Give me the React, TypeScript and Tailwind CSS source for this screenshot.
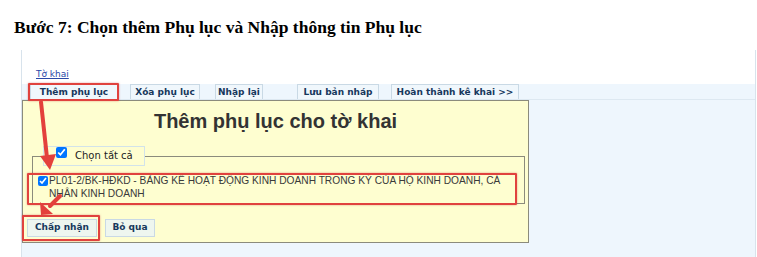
import React from 'react';

const tabs = [
  { label: 'Thêm phụ lục', w: 'w-[88px]', ml: 'ml-[8px]' },
  { label: 'Xóa phụ lục', w: 'w-[70px]', ml: 'ml-[12px]' },
  { label: 'Nhập lại', w: 'w-[48px]', ml: 'ml-[15px]' },
  { label: 'Lưu bản nháp', w: 'w-[82px]', ml: 'ml-[34px]' },
  { label: 'Hoàn thành kê khai >>', w: 'w-[128px]', ml: 'ml-[12px]' },
];

const App: React.FC = () => {
  return (
    <div className="relative w-[757px] h-[257px] overflow-hidden bg-white">
      {/* Heading */}
      <h1 className="h-[50px] pl-[14px] pt-[17px] font-['Liberation_Serif',serif] text-[17.5px] font-bold leading-[20px] text-black">
        Bước 7: Chọn thêm Phụ lục và Nhập thông tin Phụ lục
      </h1>

      {/* Embedded screenshot */}
      <div className="ml-[21px] flex h-[207px] w-[735px] flex-col border-x border-[#d8e3ec] bg-[#eef6fd] font-['DejaVu_Sans',sans-serif]">
        <div className="h-[34px] bg-white pl-[14px] pt-[10px]">
          <a href="#" className="text-[9px] leading-[12px] text-[#2a48a8] underline">Tờ khai</a>
        </div>

        <div className="flex h-[16px] border-b border-[#dde8f1]">
          {tabs.map(t => (
            <div
              key={t.label}
              className={`${t.w} ${t.ml} flex items-center justify-center border border-b-0 border-[#c9d9e5] bg-[#f0f7fc] text-[9px] font-bold leading-none text-[#17385c]`}
            >
              {t.label}
            </div>
          ))}
        </div>

        {/* Dialog */}
        <div className="h-[143px] w-[507px] border border-[#8b8b7c] bg-[#fefed0] pt-[8px]">
          <h2 className="text-center font-['Liberation_Sans',sans-serif] text-[20px] font-bold leading-[24px] text-[#333]">
            Thêm phụ lục cho tờ khai
          </h2>

          <fieldset className="ml-[9px] mt-[13px] w-[491px] border border-[#8b8b7c] px-[5px] pb-[3px]">
            <legend className="ml-[5px] flex h-[20px] w-[102px] items-center border border-[#d2e3ea] pl-[12px]">
              <input type="checkbox" checked readOnly className="h-[11px] w-[11px] -mt-[8px]" />
              <span className="ml-[8px] text-[10px] leading-none text-[#222]">Chọn tất cả</span>
            </legend>
            <div className="mt-[8px] flex items-start font-['Liberation_Sans',sans-serif]">
              <input type="checkbox" checked readOnly className="mt-[2px] h-[10px] w-[10px] shrink-0" />
              <p className="ml-[1px] w-[470px] text-[10.2px] leading-[13px] text-[#3a3a3a]">
                PL01-2/BK-HĐKD - BẢNG KÊ HOẠT ĐỘNG KINH DOANH TRONG KỲ CỦA HỘ KINH DOANH, CÁ NHÂN KINH DOANH
              </p>
            </div>
          </fieldset>

          <div className="ml-[4px] mt-[15px] flex gap-[8px]">
            <div className="flex h-[18px] w-[70px] items-center justify-center border border-[#c9d9e5] bg-[#eef6ef] text-[9px] font-bold text-[#17385c]">
              Chấp nhận
            </div>
            <div className="flex h-[18px] w-[50px] items-center justify-center border border-[#c9d9e5] bg-[#eef6ef] text-[9px] font-bold text-[#17385c]">
              Bỏ qua
            </div>
          </div>
        </div>
      </div>

      {/* Annotations */}
      <div className="absolute left-[28px] top-[83px] h-[18px] w-[91px] rounded-[1px] border-2 border-[#e0423e] shadow-[0_0_2px_rgba(200,40,40,0.5)]" />
      <div className="absolute left-[27px] top-[173px] h-[32px] w-[490px] rounded-[1px] border-2 border-[#e0423e] shadow-[0_0_2px_rgba(200,40,40,0.5)]" />
      <div className="absolute left-[22px] top-[215px] h-[26px] w-[78px] rounded-[1px] border-2 border-[#e0423e] shadow-[0_0_2px_rgba(200,40,40,0.5)]" />
      <svg className="pointer-events-none absolute left-0 top-0" width="757" height="257">
        <line x1="41" y1="102" x2="47" y2="158" stroke="#e3403c" strokeWidth="4" strokeLinecap="round" />
        <polygon points="40,156 56,154 50,170" fill="#e3403c" />
        <line x1="60" y1="196" x2="50" y2="206" stroke="#e3403c" strokeWidth="4" strokeLinecap="round" />
        <polygon points="40,202 53,214 41,215" fill="#e3403c" />
      </svg>
    </div>
  );
};

export default App;
